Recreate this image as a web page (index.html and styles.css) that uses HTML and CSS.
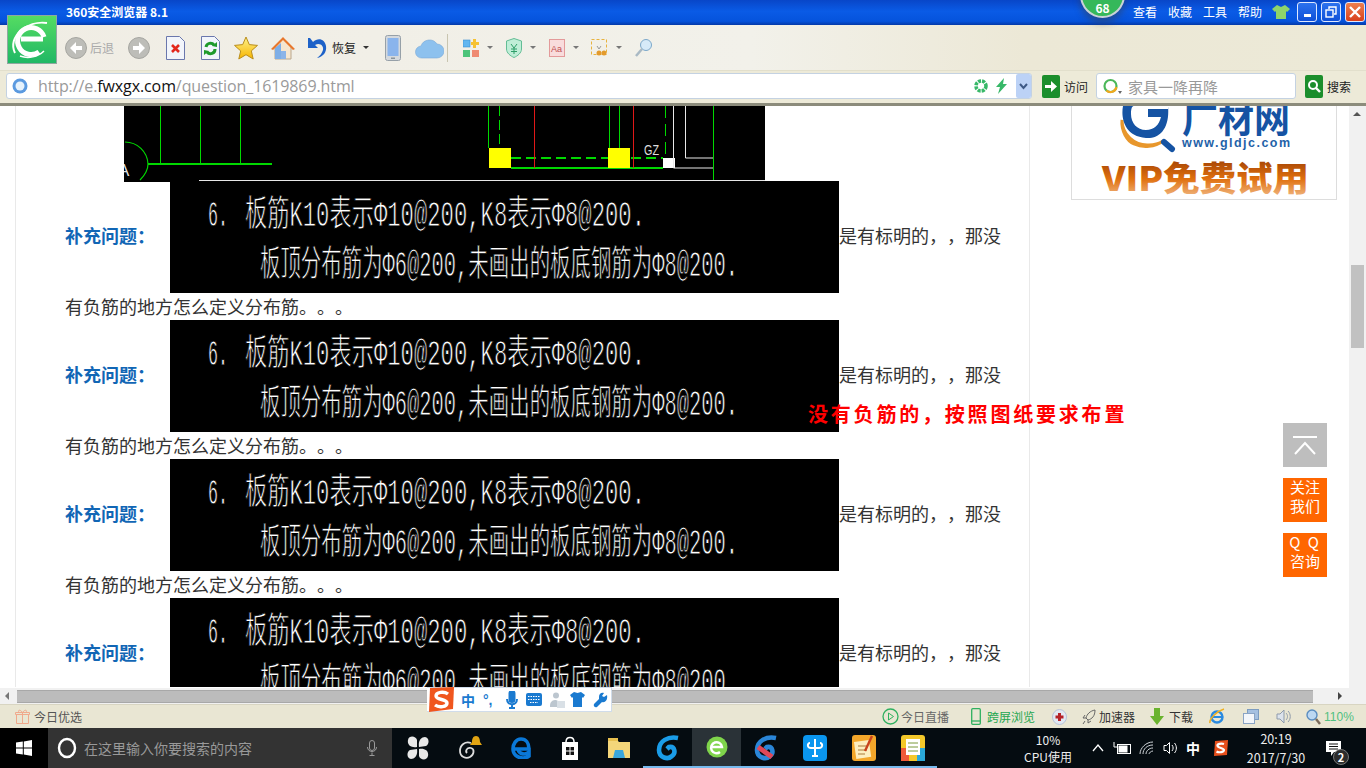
FILE: index.html
```html
<!DOCTYPE html>
<html lang="zh-CN">
<head>
<meta charset="utf-8">
<title>360安全浏览器 8.1</title>
<link rel="stylesheet" href="styles.css">
</head>
<body>
<div class="window">
  <header class="titlebar">
    <span class="app-title">360安全浏览器 8.1</span>
    <div class="score"><span>68</span></div>
    <nav class="menu"><span>查看</span><span>收藏</span><span>工具</span><span>帮助</span></nav>
    <svg class="shirt" width="18" height="15" viewBox="0 0 18 15"><path d="M5 1 9 3l4-2 5 4-3 3-1-1v8H4V7L3 8 0 5z" fill="#8ed46a"/></svg>
    <div class="winbtns">
      <span class="winbtn"><i class="min-mark"></i></span>
      <span class="winbtn"><svg width="12" height="12" viewBox="0 0 12 12" fill="none" stroke="#fff" stroke-width="1.4"><rect x="1" y="4" width="7" height="7"/><path d="M4 3V1h7v7H9"/></svg></span>
      <span class="winbtn close"><svg width="12" height="12" viewBox="0 0 12 12" stroke="#fff" stroke-width="2.4"><path d="M1 1l10 10M11 1 1 11"/></svg></span>
    </div>
  </header>

  <svg class="logo" width="50" height="49" viewBox="0 0 50 49" fill="none">
    <defs><linearGradient id="lg" x1="0" y1="0" x2="0" y2="1"><stop offset="0" stop-color="#55dc62"/><stop offset="1" stop-color="#1fb765"/></linearGradient></defs>
    <rect x=".5" y=".5" width="49" height="48" fill="url(#lg)" stroke="#8fa8a0"/>
    <path d="M14 24h22" stroke="#fff" stroke-width="5"/>
    <path d="M37 22a13.500 13.500 0 1 0-5 15" stroke="#fff" stroke-width="5"/>
    <path d="M8 38C0 22 20 5 40 8" stroke="#fff" stroke-width="2"/>
    <path d="M13 41c8 3 18 1 24-5" stroke="#fff" stroke-width="1.500"/>
  </svg>

  <div class="toolbar">
    <svg class="t-back" width="22" height="22" viewBox="0 0 22 22"><circle cx="11" cy="11" r="10.500" fill="#bdbdb8" stroke="#a5a5a0"/><path d="M11 5 5 11l6 6v-4h6V9h-6z" fill="#fff"/></svg>
    <span class="t-label back-label">后退</span>
    <svg class="t-fwd" width="22" height="22" viewBox="0 0 22 22"><circle cx="11" cy="11" r="10.500" fill="#bdbdb8" stroke="#a5a5a0"/><path d="M11 5l6 6-6 6v-4H5V9h6z" fill="#fff"/></svg>
    <svg class="t-page" width="19" height="24" viewBox="0 0 19 24"><path d="M.5.500h13l5 5v18H.5z" fill="#f2f5fb" stroke="#6a77ad"/><path d="M6 9l7 7M13 9l-7 7" stroke="#e3281e" stroke-width="2.600"/></svg>
    <svg class="t-reload" width="19" height="24" viewBox="0 0 19 24" fill="none"><path d="M.5.500h13l5 5v18H.5z" fill="#f2f5fb" stroke="#6a77ad"/><path d="M5 11a4.500 4.500 0 0 1 8-2" stroke="#1f9a2c" stroke-width="3"/><path d="M14 13a4.500 4.500 0 0 1-8 3" stroke="#1f9a2c" stroke-width="3"/><path d="M11 10l5-4v5zM8 15l-5 4v-5z" fill="#1f9a2c"/></svg>
    <svg class="t-star" width="24" height="24" viewBox="0 0 24 24"><defs><linearGradient id="sg" x1="0" y1="0" x2="0" y2="1"><stop offset="0" stop-color="#fff38a"/><stop offset="1" stop-color="#f6b400"/></linearGradient></defs><path d="M12 1l3.300 7.600 8.200.8-6.200 5.500 1.900 8.100-7.200-4.300-7.200 4.300 1.900-8.100L.5 9.400l8.200-.8z" fill="url(#sg)" stroke="#b98d1c"/></svg>
    <svg class="t-home" width="24" height="24" viewBox="0 0 24 24"><path d="M4 11v12h16V11l-8-8z" fill="#f6e6cf" stroke="#b9a68b"/><path d="M4 12v11h6V7z" fill="#7eaee6"/><path d="M0 13 12 1l12 12-2 1L12 4 2 14z" fill="#e8772c"/><rect x="10" y="15" width="5" height="8" fill="#8cb4e8"/></svg>
    <svg class="t-undo" width="21" height="24" viewBox="0 0 21 24" fill="none"><path d="M1 2v10h10l-3-3c5-3 9 1 8 5-1 3-3 6-6 8 6-1 10-6 9-12C18 3 11 1 6 6L3 2z" fill="#1e62c8"/></svg>
    <span class="t-text undo-label">恢复</span>
    <i class="caret c-undo"></i>
    <svg class="t-phone" width="16" height="26" viewBox="0 0 16 26"><rect x=".5" y=".5" width="15" height="25" rx="2" fill="#d5d9dd" stroke="#96a0a8"/><rect x="2.500" y="3" width="11" height="18" fill="#8ab4ec"/><rect x="6" y="22.500" width="4" height="1.500" fill="#8b949b"/></svg>
    <svg class="t-cloud" width="29" height="22" viewBox="0 0 29 22"><path d="M7 21a6 6 0 0 1-1-12A9 9 0 0 1 22 7a7 7 0 0 1 0 14z" fill="#8dc1ee" stroke="#7aa9d6" stroke-width=".6"/></svg>
    <i class="divider"></i>
    <svg class="t-apps" width="16" height="20" viewBox="0 0 16 20"><rect x="0" y="2" width="7" height="7" fill="#62b6f0" stroke="#3e8fd0" stroke-width=".6"/><rect x="0" y="12" width="7" height="7" fill="#4cc47a"/><rect x="9" y="12" width="7" height="7" fill="#ef8a72"/><path d="M10 1h3v3h3v3h-3v3h-3V7H8V4h2z" fill="#f6c232"/></svg>
    <i class="caret c-apps"></i>
    <svg class="t-shield" width="16" height="20" viewBox="0 0 16 20"><path d="M8 .5 15.500 3v8c0 4-4 7-7.500 8.500C4.500 18 .5 15 .5 11V3z" fill="#bfeed7" stroke="#63bd95"/><path d="M5 6l3 4 3-4M8 10v6M5 11h6M5 13.500h6" stroke="#2d9e68" fill="none"/></svg>
    <i class="caret c-mid"></i>
    <svg class="t-aa" width="16" height="18" viewBox="0 0 16 18"><rect x=".5" y=".5" width="15" height="17" fill="#f9dcdc" stroke="#e39a9a"/><text class="aa-text" x="2" y="13">Aa</text></svg>
    <i class="caret c-mid"></i>
    <svg class="t-paw" width="17" height="20" viewBox="0 0 17 20" fill="none"><rect x=".5" y="1.500" width="15" height="15" stroke="#e8b33e" stroke-dasharray="3 2"/><path d="M6 8l2 3 2-3" stroke="#999"/><circle cx="8" cy="15" r="2.500" fill="#e39a2b"/><circle cx="13" cy="15" r="2.500" fill="#e39a2b"/></svg>
    <i class="caret c-mid"></i>
    <svg class="t-mag" width="17" height="20" viewBox="0 0 17 20" fill="none"><circle cx="11" cy="7" r="5.500" fill="#d6eaf8" stroke="#7ba7c9"/><path d="M7 11 1 18" stroke="#a9b9c4" stroke-width="2.500"/></svg>
  </div>

  <div class="addressbar">
    <div class="urlbox">
      <svg class="globe" width="16" height="16" viewBox="0 0 16 16"><circle cx="8" cy="8" r="7.500" fill="#5b9ae0"/><circle cx="8" cy="8" r="4.500" fill="#e6f2fc"/></svg>
      <span class="url">http://e.<b>fwxgx.com</b>/question_1619869.html</span>
      <svg class="spin" width="14" height="14" viewBox="0 0 14 14" fill="none"><circle cx="7" cy="7" r="5" stroke="#37b868" stroke-width="3.600" stroke-dasharray="3 1"/></svg>
      <svg class="bolt" width="13" height="16" viewBox="0 0 13 16"><path d="M9 0 1 9h4l-2 7 9-10H8z" fill="#37b868"/></svg>
      <span class="dropdown"><svg width="9" height="7" viewBox="0 0 9 7" fill="none" stroke="#3f5a86" stroke-width="2"><path d="M1 1l3.500 4L8 1"/></svg></span>
    </div>
    <svg class="go" width="18" height="23" viewBox="0 0 18 23"><rect width="18" height="23" rx="2" fill="#1b8e2c"/><path d="M3 10h6V6l6 5.500-6 5.500v-4H3z" fill="#fff"/></svg>
    <span class="a-text go-text">访问</span>
    <div class="searchbox">
      <svg width="19" height="17" viewBox="0 0 19 17" fill="none"><circle cx="7.500" cy="8" r="6" stroke="#4cb85a" stroke-width="2.200"/><path d="M13.400 9a6 6 0 0 1-10 3.500" stroke="#f0a81e" stroke-width="2.200"/><path d="M15 13h4l-2 3z" fill="#666"/></svg>
      <span class="placeholder">家具一降再降</span>
    </div>
    <svg class="search-go" width="18" height="23" viewBox="0 0 18 23" fill="none"><rect width="18" height="23" rx="2" fill="#1b8e2c"/><circle cx="8" cy="10" r="4" stroke="#fff" stroke-width="2"/><path d="M11 13l4 4" stroke="#fff" stroke-width="2.400"/></svg>
    <span class="a-text search-text">搜索</span>
  </div>

  <div class="viewport">
    <div class="page">
      <main class="article">
        <svg class="plan" width="641" height="76" viewBox="0 0 641 76" fill="none">
          <rect width="641" height="76" fill="#000"/>
          <g stroke="#00d800">
            <path d="M36.500 0v58M76.500 0v58M116.500 0v58"/>
            <path d="M24 58h124" stroke-width="2"/>
            <path d="M1 36a23 23 0 0 1 23 22c0 7-4 12-8 16" stroke-width="1.200"/>
            <path d="M364.500 0v42"/>
            <path d="M375.500 0v42" stroke-dasharray="10 4"/>
            <path d="M485.500 0v42M495.500 0v42"/>
            <path d="M541.500 0v52" stroke-dasharray="12 6"/>
            <path d="M589.500 0v74"/>
            <path d="M387 52h152" stroke-width="2" stroke-dasharray="10 5"/>
            <path d="M387 62h152" stroke-width="2"/>
          </g>
          <path d="M410.500 0v62M509.500 0v62" stroke="#e01818"/>
          <rect x="365" y="42" width="22" height="20" fill="#ff0"/>
          <rect x="484" y="42" width="22" height="20" fill="#ff0"/>
          <rect x="539" y="52" width="12" height="10" fill="#fff"/>
          <path d="M549.500 0v62H589M561.500 0v52H589M75 74.500h566" stroke="#e8e8e8"/>
          <text class="plan-a" x="-6" y="70">A</text>
          <text class="plan-label" x="520" y="49" textLength="15" lengthAdjust="spacingAndGlyphs">GZ</text>
        </svg>

        <p class="question"><strong class="q-label">补充问题：</strong><svg class="note" width="669" height="112" viewBox="0 0 669 112"><rect width="669" height="112" fill="#000"/><text class="note-text" x="38" y="45" textLength="20" lengthAdjust="spacingAndGlyphs">6.</text><text class="note-text" x="75" y="45" textLength="400" lengthAdjust="spacingAndGlyphs">板筋K10表示Φ10@200,K8表示Φ8@200.</text><text class="note-text" x="90" y="95" textLength="478" lengthAdjust="spacingAndGlyphs">板顶分布筋为Φ6@200,未画出的板底钢筋为Φ8@200.</text></svg>是有标明的，，那没有负筋的地方怎么定义分布筋。。。</p>
        <p class="question"><strong class="q-label">补充问题：</strong><svg class="note" width="669" height="112" viewBox="0 0 669 112"><rect width="669" height="112" fill="#000"/><text class="note-text" x="38" y="45" textLength="20" lengthAdjust="spacingAndGlyphs">6.</text><text class="note-text" x="75" y="45" textLength="400" lengthAdjust="spacingAndGlyphs">板筋K10表示Φ10@200,K8表示Φ8@200.</text><text class="note-text" x="90" y="95" textLength="478" lengthAdjust="spacingAndGlyphs">板顶分布筋为Φ6@200,未画出的板底钢筋为Φ8@200.</text></svg>是有标明的，，那没有负筋的地方怎么定义分布筋。。。</p>
        <p class="question"><strong class="q-label">补充问题：</strong><svg class="note" width="669" height="112" viewBox="0 0 669 112"><rect width="669" height="112" fill="#000"/><text class="note-text" x="38" y="45" textLength="20" lengthAdjust="spacingAndGlyphs">6.</text><text class="note-text" x="75" y="45" textLength="400" lengthAdjust="spacingAndGlyphs">板筋K10表示Φ10@200,K8表示Φ8@200.</text><text class="note-text" x="90" y="95" textLength="478" lengthAdjust="spacingAndGlyphs">板顶分布筋为Φ6@200,未画出的板底钢筋为Φ8@200.</text></svg>是有标明的，，那没有负筋的地方怎么定义分布筋。。。</p>
        <p class="question"><strong class="q-label">补充问题：</strong><svg class="note" width="669" height="112" viewBox="0 0 669 112"><rect width="669" height="112" fill="#000"/><text class="note-text" x="38" y="45" textLength="20" lengthAdjust="spacingAndGlyphs">6.</text><text class="note-text" x="75" y="45" textLength="400" lengthAdjust="spacingAndGlyphs">板筋K10表示Φ10@200,K8表示Φ8@200.</text><text class="note-text" x="90" y="95" textLength="478" lengthAdjust="spacingAndGlyphs">板顶分布筋为Φ6@200,未画出的板底钢筋为Φ8@200.</text></svg>是有标明的，，那没有负筋的地方怎么定义分布筋。。。</p>
      </main>
      <aside class="aside">
        <svg class="ad" width="266" height="94" viewBox="0 0 266 94" fill="none">
          <defs><linearGradient id="vip" x1="0" y1="0" x2="0" y2="1"><stop offset="0" stop-color="#8c3200"/><stop offset=".55" stop-color="#e0700f"/><stop offset="1" stop-color="#f4c79c"/></linearGradient></defs>
          <rect x=".5" y="-5" width="265" height="98.500" fill="#fff" stroke="#ddd"/>
          <path d="M51 14c0 14 12 26 27 25 7 0 11-2 14-4-8 6-20 7-29 3C56 35 50 25 51 14z" fill="#e8972c" stroke="#e8972c" stroke-width="3"/>
          <path d="M97 3H77v8h13c-2 8-7 13-15 13-9 0-15-7-15-16s3-8 3-8H52c-2 10 0 30 23 32 14 1 24-10 22-32z" fill="#1553a3"/>
          <path d="M93 36l8 7" stroke="#1553a3" stroke-width="6" stroke-linecap="round"/>
          <text class="ad-brand" x="111" y="26" textLength="108" lengthAdjust="spacingAndGlyphs">广材网</text>
          <text class="ad-url" x="111" y="41" textLength="108">www.gldjc.com</text>
          <text class="ad-vip" x="31" y="85" textLength="207" lengthAdjust="spacingAndGlyphs" fill="url(#vip)">VIP免费试用</text>
        </svg>
      </aside>
      <div class="answer">没有负筋的，按照图纸要求布置</div>
      <div class="floaters">
        <div class="float-top"><svg width="26" height="20" viewBox="0 0 26 20" fill="none" stroke="#fff" stroke-width="2"><path d="M1 2h24M3 19 13 8l10 11"/></svg></div>
        <div class="float-btn"><span>关注<br>我们</span></div>
        <div class="float-btn"><span class="float-qq">Q Q</span><span>咨询</span></div>
      </div>
    </div>
    <div class="vscroll">
      <i class="up-arrow"></i>
      <i class="vthumb"></i>
    </div>
  </div>

  <div class="hscroll">
    <i class="left-arrow"></i>
    <i class="hthumb"></i>
    <i class="right-arrow"></i>
  </div>

  <div class="ime">
    <svg width="28" height="25" viewBox="0 0 28 25"><path d="M3 1 27 0l-1 22-24 3z" fill="#f0561e"/><path d="M21 7c-4-3-12-2-12 2s11 3 11 7-8 5-12 2" fill="none" stroke="#fff" stroke-width="3.400"/></svg>
    <b class="ime-zh">中</b>
    <span class="ime-punct">°,</span>
    <svg class="ime-mic" width="12" height="18" viewBox="0 0 12 18" fill="none" stroke="#1a7ad0" stroke-width="2"><rect x="3.500" y="0" width="5" height="11" rx="2.500" fill="#1a7ad0"/><path d="M1 8c0 7 10 7 10 0M6 13v4M3 17h6"/></svg>
    <svg class="ime-kb" width="16" height="13" viewBox="0 0 16 13"><rect width="16" height="13" rx="2" fill="#1a7ad0"/><path d="M2 3.500h12M2 6.500h12M4 9.500h8" stroke="#fff" stroke-dasharray="1.500 1"/></svg>
    <svg class="ime-user" width="15" height="16" viewBox="0 0 15 16"><circle cx="6" cy="3.500" r="3" fill="#bcc6cf"/><path d="M0 14c0-5 3-6 6-6l2 1v6H0z" fill="#bcc6cf"/><rect x="7" y="9" width="8" height="7" fill="#d9e0e6"/></svg>
    <svg class="ime-shirt" width="15" height="15" viewBox="0 0 15 15"><path d="M4 0l3.500 1L11 0l4 3-2 3-1-1v10H3V5L2 6 0 3z" fill="#1a7ad0"/></svg>
    <svg class="ime-wrench" width="15" height="16" viewBox="0 0 15 16"><path d="M14 3l-3 2-2-1 2-3C8 0 6 2 6 5v2L1 12c-1 2 1 4 3 3l5-5c3 1 6-2 5-7z" fill="#1a7ad0"/></svg>
  </div>

  <footer class="statusbar">
    <svg class="s-gift" width="15" height="15" viewBox="0 0 15 15" fill="none" stroke="#f0a98c"><path d="M1.500 5.500h12v9h-12zM.5 3.500h14v2H.5zM7.500 3.500v11M7.500 3.500C5 0 2.500 1 4 3.500M7.500 3.500C10 0 12.500 1 11 3.500"/></svg>
    <span class="s-text gift-text">今日优选</span>
    <svg class="s-play" width="17" height="17" viewBox="0 0 17 17" fill="none" stroke="#30b060"><circle cx="8.500" cy="8.500" r="7.500" stroke-width="1.300"/><path d="M6.500 5v7l5-3.500z"/></svg>
    <span class="s-text play-text">今日直播</span>
    <svg class="s-phone" width="10" height="17" viewBox="0 0 10 17" fill="none" stroke="#30b060" stroke-width="1.300"><rect x=".7" y=".7" width="8.600" height="15.600" rx="1"/><path d="M.7 13h8.600"/></svg>
    <span class="s-text screen-text">跨屏浏览</span>
    <svg class="s-cross" width="15" height="16" viewBox="0 0 15 16"><ellipse cx="7.500" cy="8" rx="7" ry="7.500" fill="#e2e8f2" stroke="#b7c3d8"/><path d="M6 4h3v2.500h2.500v3H9V12H6V9.500H3.500v-3H6z" fill="#b52228"/></svg>
    <svg class="s-rocket" width="14" height="16" viewBox="0 0 14 16" fill="none" stroke="#666"><path d="M13 1C8 2 5 5 4 9l2 2c4-1 7-4 7-10zM4 9 1 9l2-3M6 11v3l3-2M3 12l-2 3"/></svg>
    <span class="s-text rocket-text">加速器</span>
    <svg class="s-down" width="14" height="17" viewBox="0 0 14 17"><path d="M4 0h6v8h4l-7 9-7-9h4z" fill="#6ab32e"/></svg>
    <span class="s-text down-text">下载</span>
    <svg class="s-ie" width="16" height="17" viewBox="0 0 16 17" fill="none"><circle cx="8" cy="9" r="5.500" stroke="#2a8ae0" stroke-width="2.400"/><path d="M3 9h10" stroke="#2a8ae0" stroke-width="2"/><path d="M1 15C0 11 8 3 15 1" stroke="#f0b020" stroke-width="1.600"/></svg>
    <svg class="s-win" width="16" height="15" viewBox="0 0 16 15"><rect x="4.500" y=".5" width="11" height="10" fill="#a5c0e0" stroke="#7d9cc0"/><rect x=".5" y="4.500" width="11" height="10" fill="#f3f6fa" stroke="#8aa4c4"/></svg>
    <svg class="s-sound" width="15" height="15" viewBox="0 0 15 15" fill="none"><path d="M1 5h3l4-4v13l-4-4H1z" fill="#dce3ec" stroke="#8f9bab"/><path d="M10 4c2 2 2 5 0 7M12 2c3 3 3 8 0 11" stroke="#8f9bab"/></svg>
    <svg class="s-zoom" width="15" height="16" viewBox="0 0 15 16" fill="none"><circle cx="6" cy="6" r="5" fill="#bcd8f2" stroke="#5a8dc0" stroke-width="1.400"/><path d="M10 10l4 5" stroke="#7a6a5a" stroke-width="2.400"/></svg>
    <span class="s-text zoom-text">110%</span>
  </footer>

  <div class="taskbar">
    <div class="start"><svg width="16" height="16" viewBox="0 0 16 16" fill="#fff"><path d="M0 2.500 6.800 1.500v6H0zM7.800 1.400 16 0v7.500H7.800zM0 8.500h6.800v6L0 13.500zM7.800 8.500H16V16l-8.200-1.400z"/></svg></div>
    <div class="cortana">
      <svg width="20" height="22" viewBox="0 0 20 22" fill="none"><ellipse cx="10" cy="11" rx="8" ry="9" stroke="#fff" stroke-width="2.400"/></svg>
      <span class="cortana-text">在这里输入你要搜索的内容</span>
      <svg class="cortana-mic" width="10" height="16" viewBox="0 0 10 16" fill="none" stroke="#9a9a9a"><rect x="2.500" y=".5" width="5" height="10" rx="2.500"/><path d="M.5 7c0 6 9 6 9 0M5 12.500v3M2.500 15.500h5"/></svg>
    </div>
    <div class="tiles">
      <span class="tile tile-first"><svg width="22" height="24" viewBox="0 0 22 24" fill="#e8e8e8"><path d="M10 11C4 12 0 9 1 4s8-4 9 0zM12 11c-1-6 2-10 6-10s5 7 1 9zM12 13c6-1 10 2 9 7s-8 4-9 0zM10 13c1 6-2 10-6 10s-5-7-1-9z"/></svg></span>
      <span class="tile tile-second"><svg width="28" height="26" viewBox="0 0 28 26" fill="none"><path d="M15 8c-6-2-11 2-11 8s6 8 10 6 5-8 1-9-6 3-4 5" stroke="#ddd" stroke-width="1.800"/><path d="M20 1c3 0 4 3 4 6l2 3H14l2-3c0-3 1-6 4-6z" fill="#e2a412"/></svg></span>
      <span class="tile"><svg width="20" height="22" viewBox="0 0 20 22" fill="none"><path d="M3 12h15C18 6 15 2 10 2S2 7 2 12s4 9 10 9c2 0 4-.5 6-2v-4c-3 3-10 3-11-3" stroke="#0a78d8" stroke-width="3.600"/></svg></span>
      <span class="tile"><svg width="20" height="24" viewBox="0 0 20 24" fill="none"><path d="M2 6h16v18H2z" fill="#fff"/><path d="M6 6c0-6 8-6 8 0" stroke="#fff" stroke-width="1.500"/><path d="M6 11h3.500v3.500H6zM10.500 11H14v3.500h-3.500zM6 15.500h3.500V19H6zM10.500 15.500H14V19h-3.500z" fill="#111"/></svg></span>
      <span class="tile"><svg width="22" height="20" viewBox="0 0 22 20"><path d="M0 2h9l2 2h11v16H0z" fill="#f4d67a"/><rect x="0" y="0" width="10" height="3" fill="#e8c050"/><path d="M7 12h8l2 8H5z" fill="#3aa6dc"/></svg></span>
      <span class="tile running"><svg width="24" height="26" viewBox="0 0 24 26" fill="none"><path d="M22 3C12 1 3 6 3 15c0 8 9 10 13 6 4-3 3-10-3-9l-2 2" stroke="#1a9ce8" stroke-width="4.600"/></svg></span>
      <span class="tile active"><svg width="24" height="24" viewBox="0 0 24 24" fill="none"><circle cx="12" cy="12" r="10.500" fill="#7fd44b"/><path d="M6 12h11a5.500 5.500 0 1 0-2 5" stroke="#fff" stroke-width="2.400"/></svg></span>
      <span class="tile running"><svg width="24" height="26" viewBox="0 0 24 26" fill="none"><path d="M22 3C12 1 3 6 3 15c0 8 9 10 13 6 4-3 3-10-3-9l-2 2" stroke="#2a86d8" stroke-width="4.600"/><path d="M4 12l14 10" stroke="#e04858" stroke-width="5"/></svg></span>
      <span class="tile running"><svg width="24" height="26" viewBox="0 0 24 26" fill="none"><rect width="24" height="26" rx="4" fill="#0a96ef"/><path d="M12 4v17M7 8c-3 0-3 5 1 5h8c4 0 4-5 1-5M9 21h6" stroke="#fff" stroke-width="2"/></svg></span>
      <span class="tile running"><svg width="24" height="26" viewBox="0 0 24 26" fill="none"><rect width="24" height="26" rx="3" fill="#f3a62a"/><rect x="3" y="6" width="15" height="17" fill="#fdeec0" transform="rotate(-8 10 14)"/><path d="M6 11h9M6 15h9M6 19h7" stroke="#a87a3a"/><path d="M20 1 13 16" stroke="#c9431e" stroke-width="2.400"/></svg></span>
      <span class="tile running"><svg width="24" height="26" viewBox="0 0 24 26"><rect width="24" height="26" rx="3" fill="#f4c82a"/><rect y="13" width="8" height="13" fill="#ef5a3a"/><rect x="16" y="13" width="8" height="13" fill="#2aa8d8"/><rect x="5" y="4" width="14" height="16" fill="#fff"/><path d="M7 8h10M7 12h10M7 16h10" stroke="#7a9a3a"/></svg></span>
    </div>
    <div class="cpu"><span>10%</span><span>CPU使用</span></div>
    <svg class="tray-chev" width="12" height="8" viewBox="0 0 12 8" fill="none" stroke="#fff" stroke-width="1.300"><path d="M1 7l5-6 5 6"/></svg>
    <svg class="tray-bat" width="18" height="14" viewBox="0 0 18 14" fill="none" stroke="#fff"><rect x="4.500" y="3.500" width="13" height="9"/><rect x="6" y="5" width="8" height="6" fill="#fff"/><path d="M1 1v5h4"/></svg>
    <svg class="tray-wifi" width="15" height="14" viewBox="0 0 15 14" fill="none" stroke="#cfd4d8"><path d="M1 13c0-6 6-12 13-12M4 13c0-5 4-9 10-9M7 13c0-3 3-6 7-6M10 13c0-1 2-3 4-3"/></svg>
    <svg class="tray-vol" width="15" height="14" viewBox="0 0 15 14" fill="none" stroke="#fff"><path d="M1 4.500h2.500l3-3v11l-3-3H1zM9 4c1.500 2 1.500 4 0 6M11.500 2c2.500 3 2.500 7 0 10"/></svg>
    <span class="tray-zh">中</span>
    <svg class="tray-s" width="15" height="16" viewBox="0 0 15 16"><path d="M2 1 15 0l-1 15-13 1z" fill="#e8501c"/><path d="M11 4C8 3 4 4 4.500 6S11 8 11 10s-5 3-7.500 1.500" fill="none" stroke="#fff" stroke-width="2.200"/></svg>
    <div class="clock"><span>20:19</span><span>2017/7/30</span></div>
    <div class="notify">
      <svg width="15" height="15" viewBox="0 0 15 15"><path d="M0 0h15v11H8l-3 4v-4H0z" fill="#fff"/><path d="M3 3h9M3 5.500h9M3 8h9" stroke="#111"/></svg>
      <span class="notify-badge">2</span>
    </div>
  </div>
</div>
</body>
</html>
```

FILE: styles.css
```css
* { box-sizing: border-box; }
html, body { margin: 0; padding: 0; height: 100%; overflow: hidden; }
body { font-family: "Noto Sans CJK SC", "Liberation Sans", sans-serif; text-spacing-trim: space-all; }
i { display: block; font-style: normal; }
svg { display: block; flex: none; }

.window { position: relative; display: flex; flex-direction: column; width: 1366px; height: 768px; overflow: hidden; background: #fff; }

/* title bar */
.titlebar { position: relative; display: flex; align-items: center; flex: none; height: 25px; padding: 0 0 2px 66px; background: linear-gradient(#0846c8 0, #0a5be6 45%, #0553dc 85%, #0439a8 100%); color: #fff; }
.app-title { width: 102px; font-size: 12px; font-weight: 700; line-height: 22px; white-space: nowrap; }
.score { position: absolute; left: 1080px; top: -28px; display: flex; align-items: flex-end; justify-content: center; width: 45px; height: 46px; padding-bottom: 1px; border-radius: 50%; border: 2px solid #c8d2d8; background: #35b85a; box-shadow: 0 5px 7px rgba(60, 60, 60, .45); font-size: 12px; font-weight: 700; line-height: 15px; }
.menu { display: flex; gap: 11px; margin-left: 965px; font-size: 12px; line-height: 22px; }
.shirt { margin-left: 10px; }
.winbtns { display: flex; gap: 4px; margin-left: 7px; }
.winbtn { display: flex; align-items: center; justify-content: center; width: 20px; height: 20px; border: 1px solid #dfe8ff; border-radius: 3px; background: linear-gradient(#2c72ee, #0f50d8); }
.close { background: linear-gradient(#ee8050, #d8401c); }
.min-mark { width: 7px; height: 3px; margin-top: 8px; background: #fff; }

/* logo overlay */
.logo { position: absolute; left: 7px; top: 15px; }

/* toolbar */
.toolbar { display: flex; align-items: center; flex: none; height: 45px; padding-left: 65px; background: linear-gradient(90deg, #f0ede4 0, #f2f1ea 55%, #ece8d6 75%, #ece9d7 100%); }
.t-label { font-size: 12px; color: #aaa; }
.t-text { font-size: 12px; color: #222; }
.back-label { margin-left: 3px; }
.t-fwd { margin-left: 14px; }
.t-page { margin-left: 16px; }
.t-reload { margin-left: 16px; }
.t-star { margin-left: 14px; }
.t-home { margin-left: 13px; }
.t-undo { margin-left: 12px; }
.undo-label { margin-left: 4px; }
.caret { width: 0; height: 0; border-style: solid; border-width: 3px 3px 0; border-color: #333 transparent transparent; }
.c-undo { margin-left: 7px; }
.t-phone { margin-left: 16px; }
.t-cloud { margin-left: 14px; }
.divider { width: 1px; height: 28px; margin-left: 3px; background: #c9c5b0; }
.t-apps { margin-left: 15px; }
.c-apps { margin-left: 8px; border-top-color: #777; }
.c-mid { margin-left: 8px; border-top-color: #777; }
.t-shield { margin-left: 13px; }
.t-aa { margin-left: 13px; }
.aa-text { font-family: "Liberation Sans", sans-serif; font-size: 9px; fill: #c05050; }
.t-paw { margin-left: 12px; }
.t-mag { margin-left: 13px; }

/* address bar */
.addressbar { display: flex; align-items: center; flex: none; height: 36px; padding: 0 0 2px 6px; background: #edead8; border-top: 1px solid #e2dfcc; border-bottom: 3px solid #8c8c7c; }
.urlbox { display: flex; align-items: center; width: 1026px; height: 26px; padding: 0 0 0 5px; background: #fff; border: 1px solid #c4d2e2; border-radius: 3px; }
.url { flex: 1; margin-left: 10px; font-family: "Open Sans", "Liberation Sans", sans-serif; font-size: 16px; letter-spacing: -.1px; color: #9a9a9a; white-space: nowrap; }
.url b { font-weight: 400; color: #111; }
.spin { margin-right: 7px; }
.bolt { margin-right: 8px; }
.dropdown { display: flex; align-items: center; justify-content: center; width: 15px; height: 24px; background: #bcd2f6; border-radius: 2px; }
.go { margin-left: 10px; }
.a-text { font-size: 12px; color: #222; }
.go-text { margin-left: 4px; }
.searchbox { display: flex; align-items: center; width: 200px; height: 26px; margin-left: 8px; padding-left: 6px; background: #fff; border: 1px solid #c4d2e2; border-radius: 3px; }
.placeholder { margin-left: 6px; font-size: 15px; color: #999; white-space: nowrap; }
.search-go { margin-left: 9px; }
.search-text { margin-left: 4px; }

/* page */
.viewport { display: flex; flex: none; height: 582px; overflow: hidden; }
.page { display: flex; flex: 1; min-width: 0; padding-left: 15px; background: #fff; }
.article { position: relative; width: 1015px; flex: none; height: 581px; padding: 0 15px 0 49px; border-left: 1px solid #e9e9e9; border-right: 1px solid #e9e9e9; overflow: hidden; }
.plan { margin: 0 0 -1px 59px; }
.plan-label { font-family: "Liberation Sans", sans-serif; font-size: 15px; fill: #ddd; }
.plan-a { font-family: "Liberation Sans", sans-serif; font-size: 17px; fill: #ddd; }
.question { margin: 0; font-size: 18px; line-height: 27px; color: #333; }
.q-label { color: #1166b5; font-weight: 700; }
.note { display: inline-block; margin-left: 15px; vertical-align: -50px; }
.note-text { font-family: "Liberation Mono", "Noto Sans CJK SC", monospace; font-size: 36px; fill: #fff; stroke: #000; stroke-width: .9px; }
.answer { position: absolute; left: 808px; top: 401px; font-size: 20px; font-weight: 700; letter-spacing: 2.800px; line-height: 26px; color: #f00; white-space: nowrap; }
.aside { flex: 1; padding-left: 41px; }
.ad-brand { font-family: "Noto Sans CJK SC", sans-serif; font-size: 38px; font-weight: 700; fill: #1553a3; }
.ad-url { font-family: "Liberation Sans", sans-serif; font-size: 12.500px; font-weight: 700; fill: #1f62a8; }
.ad-vip { font-family: "Noto Sans CJK SC", sans-serif; font-size: 34px; font-weight: 900; }
.floaters { position: absolute; left: 1283px; top: 423px; display: flex; flex-direction: column; gap: 11px; width: 44px; }
.float-top { display: flex; align-items: center; justify-content: center; height: 44px; background: #bebebe; }
.float-btn { height: 44px; overflow: hidden; background: #f60; color: #fff; font-size: 15px; line-height: 19px; text-align: center; }
.float-btn span { display: block; }
.float-btn span:first-child { margin-top: -1px; }
.float-qq { letter-spacing: 2px; }

/* scrollbars */
.vscroll { flex: none; width: 17px; padding-top: 6px; background: #f1f1f1; }
.up-arrow { width: 0; height: 0; margin: 0 0 0 4px; border-style: solid; border-width: 0 4px 4px; border-color: transparent transparent #555; }
.vthumb { width: 13px; height: 83px; margin: 149px 0 0 2px; background: #c1c1c1; }
.hscroll { display: flex; align-items: center; flex: none; height: 16px; padding-left: 5px; background: #f1f1f1; }
.left-arrow { width: 0; height: 0; border-style: solid; border-width: 4px 4px 4px 0; border-color: transparent #777 transparent transparent; }
.hthumb { width: 1296px; height: 13px; margin-left: 8px; background: #bcbcbc; border-top: 1px solid #a8a8a8; border-bottom: 1px solid #a8a8a8; }
.right-arrow { width: 0; height: 0; margin-left: 25px; border-style: solid; border-width: 4px 0 4px 4px; border-color: transparent transparent transparent #444; }

/* IME */
.ime { position: absolute; left: 427px; top: 687px; display: flex; align-items: center; width: 185px; height: 25px; background: #fff; border: 1px solid #d0dcea; border-left: 0; }
.ime-zh { margin-left: 6px; font-size: 14px; color: #1a7ad0; }
.ime-punct { margin-left: 8px; width: 16px; font-family: "Liberation Sans", sans-serif; font-size: 14px; font-weight: 700; color: #1a7ad0; }
.ime-mic { margin-left: 7px; }
.ime-kb { margin-left: 8px; }
.ime-user { margin-left: 8px; }
.ime-shirt { margin-left: 5px; }
.ime-wrench { margin-left: 8px; }

/* status bar */
.statusbar { display: flex; align-items: center; flex: none; height: 24px; padding-left: 15px; background: #e9e6d3; border-top: 1px solid #d8d5c2; }
.s-text { font-size: 12px; color: #555; white-space: nowrap; }
.gift-text { margin-left: 4px; }
.s-play { margin-left: 800px; }
.play-text { margin-left: 2px; color: #666; }
.s-phone { margin-left: 22px; }
.screen-text { margin-left: 6px; color: #24a650; }
.s-cross { margin-left: 17px; }
.s-rocket { margin-left: 15px; }
.rocket-text { margin-left: 3px; width: 36px; color: #333; }
.s-down { margin-left: 15px; }
.down-text { margin-left: 5px; color: #333; }
.s-ie { margin-left: 16px; }
.s-win { margin-left: 18px; }
.s-sound { margin-left: 17px; }
.s-zoom { margin-left: 15px; }
.zoom-text { margin-left: 3px; font-family: "Liberation Sans", sans-serif; color: #50c080; }

/* taskbar */
.taskbar { display: flex; align-items: center; flex: none; height: 40px; background: #050c11; color: #eee; }
.start { display: flex; align-items: center; justify-content: center; width: 48px; height: 40px; background: #000; }
.cortana { display: flex; align-items: center; width: 344px; height: 40px; padding-left: 9px; background: #333; }
.cortana-text { margin-left: 7px; font-size: 14px; color: #999; white-space: nowrap; }
.cortana-mic { margin-left: 115px; }
.tiles { display: flex; margin-left: 6px; }
.tile { display: flex; align-items: center; justify-content: center; width: 49px; height: 40px; }
.tile-first svg { margin-right: 9px; }
.tile-second svg { margin-right: 3px; }
.active { background: #2a3237; border-bottom: 2px solid #76b9ed; }
.running { box-shadow: inset 0 -2px 0 #76b9ed; }
.cpu { display: flex; flex-direction: column; align-items: center; width: 80px; margin-left: 71px; font-size: 12px; line-height: 17px; }
.tray-chev { margin-left: 4px; }
.tray-bat { margin-left: 9px; }
.tray-wifi { margin-left: 8px; }
.tray-vol { margin-left: 9px; }
.tray-zh { margin-left: 8px; font-size: 14px; font-weight: 700; color: #fff; }
.tray-s { margin-left: 13px; }
.clock { display: flex; flex-direction: column; align-items: center; width: 90px; margin-left: 3px; font-size: 12.500px; line-height: 19px; }
.notify { position: relative; margin-left: 5px; }
.notify-badge { position: absolute; left: 7px; top: 8px; width: 16px; height: 16px; border-radius: 50%; background: #2c2c2c; border: 1px solid #777; font-size: 11px; font-weight: 700; line-height: 14px; text-align: center; color: #fff; }
```
